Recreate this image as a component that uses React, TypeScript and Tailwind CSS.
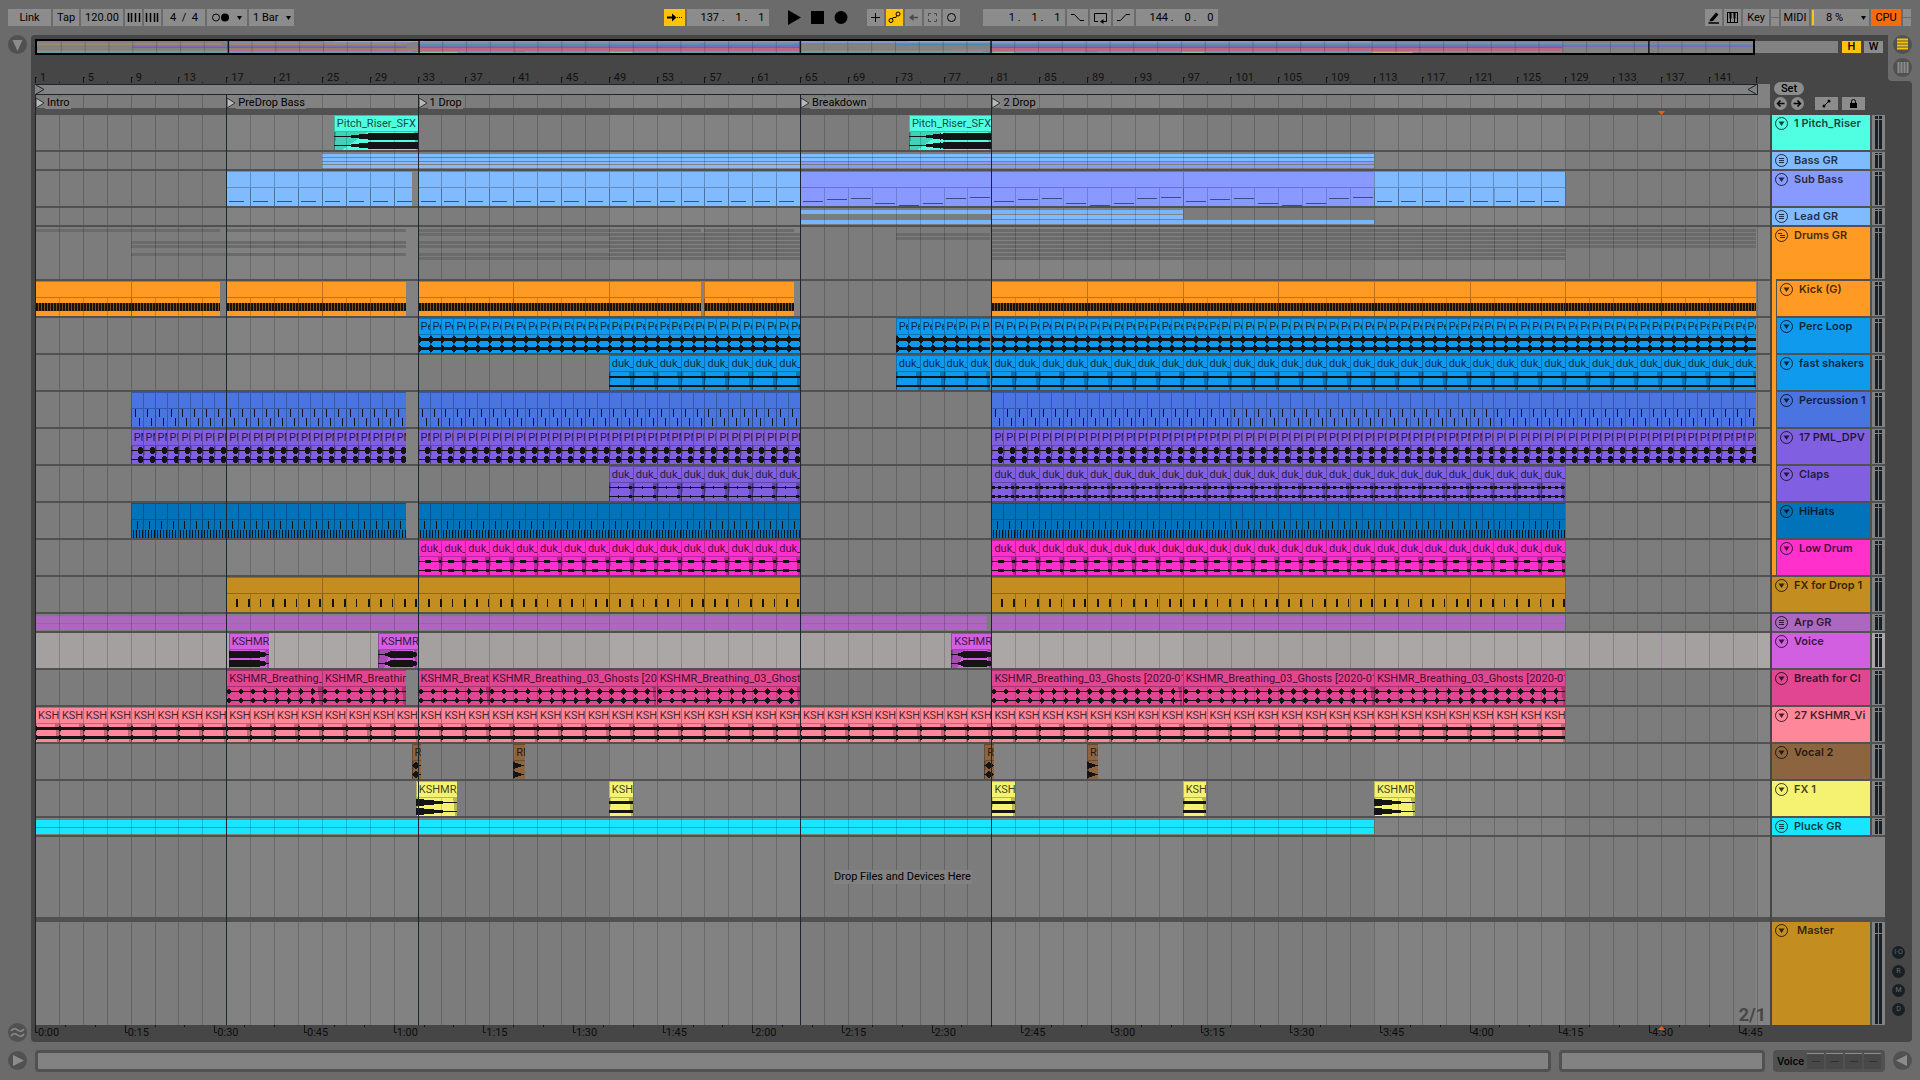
import type { ReactNode } from "react";
import clsx from "clsx";

const TOTAL_BARS = 145.13;
const BAR_PX = 11.955;
const VIEW_W = 1735;

const pct = (bars: number) => `${(bars / TOTAL_BARS) * 100}%`;

type WaveKind =
  | "riser" | "perc" | "shaker" | "pml" | "claps" | "clapsFast" | "low"
  | "voiceOut" | "voiceIn" | "breath" | "vinyl" | "blip" | "decay" | "block"
  | "kick" | "percMidi" | "hihat" | "fxMidi" | "bass" | "lead" | "none";

interface Clip {
  start: number;
  end: number;
  wave: WaveKind;
  label?: string;
  color?: string;
}

interface Strip {
  start: number;
  end: number;
  y: number;
  h: number;
  color: string;
}

interface Track {
  name: string;
  bg: string;
  hex: string;
  height: string;
  px: number;
  icon?: "fold" | "group" | "groupOpen";
  child?: boolean;
  selected?: boolean;
  clips?: Clip[];
  strips?: Strip[];
}

function repeat(start: number, end: number, len: number, wave: WaveKind, label?: string, color?: string): Clip[] {
  const out: Clip[] = [];
  for (let b = start; b < end; b += len) {
    out.push({ start: b, end: Math.min(b + len, end), wave, label, color });
  }
  return out;
}

const TALL = "h-[35px]";
const SHORT = "h-[17px]";
const BREATH = "KSHMR_Breathing_03_Ghosts [2020-01";

const drumTracks: Track[] = [
  {
    name: "Kick (G)", bg: "bg-[#ff9a24]", hex: "#ff9a24", height: TALL, px: 35, child: true,
    clips: [
      ...repeat(1, 16.5, 8, "kick"), ...repeat(17, 32, 8, "kick"),
      ...repeat(33, 56.7, 8, "kick"), ...repeat(57, 64.5, 8, "kick"), ...repeat(81, 145, 8, "kick"),
    ],
  },
  {
    name: "Perc Loop", bg: "bg-[#109aee]", hex: "#109aee", height: TALL, px: 35, child: true,
    clips: [...repeat(33, 65, 1, "perc", "Pe"), ...repeat(73, 80.9, 1, "perc", "Pe"), ...repeat(81, 145, 1, "perc", "Pe")],
  },
  {
    name: "fast shakers", bg: "bg-[#109aee]", hex: "#109aee", height: TALL, px: 35, child: true,
    clips: [...repeat(49, 65, 2, "shaker", "duk_"), ...repeat(73, 80.9, 2, "shaker", "duk_"), ...repeat(81, 145, 2, "shaker", "duk_")],
  },
  {
    name: "Percussion 1", bg: "bg-[#4a74e0]", hex: "#4a74e0", height: TALL, px: 35, child: true,
    clips: [...repeat(9, 32, 1, "percMidi"), ...repeat(33, 65, 1, "percMidi"), ...repeat(81, 145, 1, "percMidi")],
  },
  {
    name: "17 PML_DPV", bg: "bg-[#8060e0]", hex: "#8060e0", height: TALL, px: 35, child: true,
    clips: [...repeat(9, 32, 1, "pml", "PM"), ...repeat(33, 65, 1, "pml", "PM"), ...repeat(81, 145, 1, "pml", "PM")],
  },
  {
    name: "Claps", bg: "bg-[#8060e0]", hex: "#8060e0", height: TALL, px: 35, child: true,
    clips: [...repeat(49, 65, 2, "claps", "duk_"), ...repeat(81, 129, 2, "clapsFast", "duk_")],
  },
  {
    name: "HiHats", bg: "bg-[#0073bb]", hex: "#0073bb", height: TALL, px: 35, child: true,
    clips: [...repeat(9, 32, 1, "hihat"), ...repeat(33, 65, 1, "hihat"), ...repeat(81, 129, 1, "hihat")],
  },
  {
    name: "Low Drum", bg: "bg-[#ff30cc]", hex: "#ff30cc", height: TALL, px: 35, child: true,
    clips: [...repeat(33, 65, 2, "low", "duk_"), ...repeat(81, 129, 2, "low", "duk_")],
  },
];

const BLUE = "#80bbff";
const INDIGO = "#889aff";

const tracks: Track[] = [
  {
    name: "1 Pitch_Riser", bg: "bg-[#50ffe2]", hex: "#50ffe2", height: TALL, px: 35,
    clips: [
      { start: 26, end: 33, wave: "riser", label: "Pitch_Riser_SFX" },
      { start: 74.1, end: 81, wave: "riser", label: "Pitch_Riser_SFX" },
    ],
  },
  {
    name: "Bass GR", bg: "bg-[#80bbff]", hex: BLUE, height: SHORT, px: 17, icon: "group",
    strips: [
      { start: 25, end: 113, y: 2, h: 3, color: BLUE },
      { start: 25, end: 113, y: 6, h: 3, color: BLUE },
      { start: 25, end: 65, y: 10, h: 2, color: BLUE },
      { start: 25, end: 65, y: 13, h: 3, color: BLUE },
      { start: 65, end: 113, y: 10, h: 2, color: INDIGO },
      { start: 65, end: 113, y: 13, h: 3, color: INDIGO },
    ],
  },
  {
    name: "Sub Bass", bg: "bg-[#889aff]", hex: INDIGO, height: TALL, px: 35,
    clips: [
      ...repeat(17, 32.5, 2, "bass", undefined, BLUE),
      ...repeat(33, 65, 2, "bass", undefined, BLUE),
      ...repeat(65, 113, 16, "lead"),
      ...repeat(113, 129, 2, "bass", undefined, BLUE),
    ],
  },
  {
    name: "Lead GR", bg: "bg-[#80bbff]", hex: BLUE, height: SHORT, px: 17, icon: "group",
    strips: [
      { start: 65, end: 97, y: 2, h: 4, color: "#79b5f8" },
      { start: 81, end: 97, y: 7, h: 4, color: BLUE },
      { start: 65, end: 113, y: 12, h: 4, color: "#79b5f8" },
    ],
  },
  {
    name: "Drums GR", bg: "bg-[#ff9a24]", hex: "#ff9a24", height: "h-[52px]", px: 52, icon: "groupOpen",
    strips: drumTracks.flatMap((t, row) =>
      mergeRuns(t.clips ?? []).map(([start, end]) => ({ start, end, y: 2 + row * 4, h: 3, color: "#6b6b6b" })),
    ),
  },
  ...drumTracks,
  {
    name: "FX for Drop 1", bg: "bg-[#c48d20]", hex: "#c48d20", height: TALL, px: 35,
    clips: [...repeat(17, 65, 8, "fxMidi"), ...repeat(81, 129, 8, "fxMidi")],
  },
  {
    name: "Arp GR", bg: "bg-[#ab68be]", hex: "#ab68be", height: SHORT, px: 17, icon: "group",
    strips: [
      { start: 1, end: 80.6, y: 2, h: 7, color: "#ab68be" },
      { start: 1, end: 80.6, y: 10, h: 6, color: "#ab68be" },
      { start: 81, end: 129, y: 2, h: 7, color: "#ab68be" },
      { start: 81, end: 129, y: 10, h: 6, color: "#ab68be" },
    ],
  },
  {
    name: "Voice", bg: "bg-[#d25ee0]", hex: "#d25ee0", height: TALL, px: 35, selected: true,
    clips: [
      { start: 17.2, end: 20.55, wave: "voiceOut", label: "KSHMR_" },
      { start: 29.7, end: 33, wave: "voiceIn", label: "KSHMR_" },
      { start: 77.65, end: 81, wave: "voiceIn", label: "KSHMR_" },
    ],
  },
  {
    name: "Breath for Cl", bg: "bg-[#e04692]", hex: "#e04692", height: TALL, px: 35,
    clips: [
      ...repeat(17, 32, 8, "breath", BREATH),
      { start: 33, end: 39, wave: "breath", label: BREATH },
      { start: 39, end: 53, wave: "breath", label: BREATH },
      { start: 53, end: 65, wave: "breath", label: BREATH },
      ...repeat(81, 129, 16, "breath", BREATH),
    ],
  },
  {
    name: "27 KSHMR_Vi", bg: "bg-[#ff879a]", hex: "#ff879a", height: TALL, px: 35,
    clips: repeat(1, 129, 2, "vinyl", "KSHM"),
  },
  {
    name: "Vocal 2", bg: "bg-[#8c6540]", hex: "#8c6540", height: TALL, px: 35,
    clips: [
      { start: 32.5, end: 33.25, wave: "blip", label: "R" },
      { start: 41, end: 41.95, wave: "decay", label: "RM" },
      { start: 80.4, end: 81.25, wave: "blip", label: "R" },
      { start: 89, end: 89.95, wave: "decay", label: "RM" },
    ],
  },
  {
    name: "FX 1", bg: "bg-[#f4f270]", hex: "#f4f270", height: TALL, px: 35,
    clips: [
      { start: 32.85, end: 36.3, wave: "decay", label: "KSHMR_" },
      { start: 49, end: 51, wave: "block", label: "KSHM" },
      { start: 81, end: 83, wave: "block", label: "KSHM" },
      { start: 97, end: 98.95, wave: "block", label: "KSHM" },
      { start: 113, end: 116.45, wave: "decay", label: "KSHMR_" },
    ],
  },
  {
    name: "Pluck GR", bg: "bg-[#19e5ff]", hex: "#19e5ff", height: SHORT, px: 17, icon: "group",
    strips: [
      { start: 1, end: 113, y: 2, h: 7, color: "#19e5ff" },
      { start: 1, end: 113, y: 10, h: 6, color: "#19e5ff" },
    ],
  },
];

const locators = [
  { bar: 1, name: "Intro" },
  { bar: 17, name: "PreDrop Bass" },
  { bar: 33, name: "1 Drop" },
  { bar: 65, name: "Breakdown" },
  { bar: 81, name: "2 Drop" },
];

function mergeRuns(clips: Clip[]): [number, number][] {
  const runs: [number, number][] = [];
  for (const c of clips) {
    const last = runs[runs.length - 1];
    if (last && Math.abs(last[1] - c.start) < 0.01) last[1] = c.end;
    else runs.push([c.start, c.end]);
  }
  return runs;
}

/* ---------- waveforms ---------- */

const noise = (x: number) => Math.abs(Math.sin(x * 12.9898) * 43758.5453) % 1;

function amplitude(kind: WaveKind, t: number, len: number) {
  const f = t % 1;
  const p = t / len;
  switch (kind) {
    case "riser":
      return p < 0.15 ? 0.5 : Math.min(3.2, 0.5 + (p - 0.15) * 9) + (p > 0.3 ? noise(t) * 0.6 : 0);
    case "perc":
      return f < 0.17 || f > 0.95 ? 3.8 : 1.6 + noise(t) * 0.5;
    case "shaker":
      return 1;
    case "pml":
      return f > 0.66 && f < 0.97 ? 3.9 : 0.5;
    case "claps":
      return Math.abs(t - 0.8) < 0.09 || Math.abs(t - 1.8) < 0.12 ? 1.4 : 0.5;
    case "clapsFast":
      return [0.25, 0.75, 1.3, 1.85].some((c) => Math.abs(t - c) < 0.12) ? 1.5 : 0.5;
    case "low":
      return (t > 0.6 && t < 1.15) || t > 1.8 ? 1.5 : 0.5;
    case "voiceOut":
      return p > 0.92 ? 0.5 : 3 - Math.max(0, p - 0.75) * 9 + noise(t) * 0.3;
    case "voiceIn":
      return p < 0.15 ? 0.5 : Math.min(3.1, 0.6 + (p - 0.15) * 14) - Math.max(0, p - 0.88) * 12 + noise(t) * 0.3;
    case "breath":
      return Math.max(0.5, 3.4 - Math.abs(f - 0.25) * 14);
    case "vinyl":
      return t < 0.2 ? 2.6 : 1.1 + noise(t) * 0.5;
    case "blip":
      return Math.max(0.5, 4 - Math.abs(p - 0.5) * 9);
    case "decay":
      return Math.max(0.5, 3.9 * (1 - p * 1.15));
    case "block":
      return 1.5;
    default:
      return 0;
  }
}

function envelopePath(kind: WaveKind, len: number) {
  const w = Math.round(len * 12);
  return [4.5, 13.5]
    .map((mid) => {
      const top: string[] = [];
      const bottom: string[] = [];
      for (let x = 0; x <= w; x++) {
        const a = amplitude(kind, x / 12, len);
        top.push(`${x} ${(mid - a).toFixed(2)}`);
        bottom.unshift(`${x} ${(mid + a).toFixed(2)}`);
      }
      return `M${top.join("L")}L${bottom.join("L")}Z`;
    })
    .join("");
}

const LEAD_NOTES = [12, 10, 9, 14, 16, 14, 9, 8];

function notePath(kind: WaveKind, len: number) {
  let d = "";
  // slightly over a whole unit so a note never falls between two pixels
  const rect = (x: number, y: number, w: number, h: number) => {
    d += `M${x} ${y}h${w + 0.05}v${h}h${-w - 0.05}Z`;
  };
  if (kind === "kick") for (let x = 0; x < len * 12 - 1; x += 3) rect(x + 1, 5, 2, 8);
  if (kind === "percMidi") {
    rect(4, 0, 1, 8);
    rect(8, 9, 1, 8);
  }
  if (kind === "hihat") {
    rect(6, 1, 1, 8);
    for (let x = 2; x < 12; x += 3) rect(x, 10, 1, 8);
  }
  if (kind === "fxMidi") for (let b = 0; b < len; b++) rect(b * 12 + (b === len - 1 ? 9 : 10), 5, b % 3 === 2 ? 1 : 2, 8);
  if (kind === "bass") rect(3, 13, Math.min(15, len * 12 - 3), 1);
  if (kind === "lead") for (let i = 0; i < len / 2; i++) rect(i * 24 + 3, LEAD_NOTES[i % 8] + 1, 20, 1);
  return d;
}

const MIDI: WaveKind[] = ["kick", "percMidi", "hihat", "fxMidi", "bass", "lead", "none"];

function Waveform({ kind, len }: { kind: WaveKind; len: number }) {
  const w = Math.round(len * 12);
  const midi = MIDI.includes(kind);
  const soft = kind === "bass" || kind === "lead";
  return (
    <svg
      className="relative z-20 block h-[18px] w-full"
      viewBox={`0 0 ${w} 18`}
      preserveAspectRatio="none"
      shapeRendering="crispEdges"
      aria-hidden="true"
    >
      {kind === "kick" && <rect x="0" y="5" width={w} height="8" fill="#000" opacity="0.5" />}
      {kind === "riser" && <path d={`M0 0H${w * 0.4}L${w * 0.1} 18H0Z`} fill="#000" opacity="0.18" />}
      {kind === "voiceIn" && <path d={`M0 0H${w * 0.35}L${w * 0.15} 18H0Z`} fill="#000" opacity="0.2" />}
      {!midi && len > 1 && <path d={`M${w} 0H${w - 4}L${w - 2} 18H${w}Z`} fill="#000" opacity="0.25" />}
      {!midi && <path d="M0 0H2L1 18H0Z" fill="#000" opacity="0.2" />}
      <path
        d={midi ? notePath(kind, len) : envelopePath(kind, len)}
        fill={soft ? "#1f3a66" : "#141414"}
        opacity={soft ? 0.8 : 1}
      />
    </svg>
  );
}

/* ---------- timeline ---------- */

const gridPath = Array.from({ length: 72 }, (_, i) => `M${Math.round((i + 1) * 2 * BAR_PX)} 0h1v10h-1Z`).join("");
const bandPath = [0, 2, 4, 6, 8]
  .map((i) => `M${Math.round(i * 16 * BAR_PX)} 0h${Math.round(16 * BAR_PX)}v10h${-Math.round(16 * BAR_PX)}Z`)
  .join("");

function Shading() {
  return (
    <svg className="absolute inset-0 size-full" viewBox={`0 0 ${VIEW_W} 10`} preserveAspectRatio="none" aria-hidden="true">
      <path d={bandPath} fill="#000" opacity="0.04" />
    </svg>
  );
}

function Grid() {
  return (
    <svg
      className="absolute inset-0 z-10 size-full"
      viewBox={`0 0 ${VIEW_W} 10`}
      preserveAspectRatio="none"
      shapeRendering="crispEdges"
      aria-hidden="true"
    >
      <path d={gridPath} fill="#000" opacity="0.18" />
    </svg>
  );
}

function ClipBlock({ clip, color }: { clip: Clip; color: string }) {
  const len = clip.end - clip.start;
  return (
    <div
      className="absolute inset-y-0 overflow-hidden"
      style={{ left: pct(clip.start - 1), width: pct(len), backgroundColor: clip.color ?? color }}
    >
      <div
        className="relative z-20 h-[17px] overflow-hidden border-y border-l border-black/25 pl-[2px] text-[11px] leading-[15px] whitespace-nowrap text-black/75"
        style={{ backgroundColor: clip.color ?? color }}
      >
        {clip.label}
      </div>
      <div className="relative">
        <span className="absolute inset-y-0 left-0 z-20 w-px bg-black/25" />
        <Waveform kind={clip.wave} len={len} />
      </div>
    </div>
  );
}

function Lane({ track }: { track: Track }) {
  return (
    <div className={clsx("relative isolate shrink-0 overflow-hidden", track.height, track.selected ? "bg-[#aba7a6]" : "bg-[#828282]")}>
      <Shading />
      {track.clips?.map((clip) => <ClipBlock key={clip.start} clip={clip} color={track.hex} />)}
      {track.strips?.map((s, i) => (
        <div
          key={i}
          className="absolute"
          style={{ left: pct(s.start - 1), width: pct(s.end - s.start), top: s.y, height: s.h, backgroundColor: s.color }}
        />
      ))}
      <Grid />
      {track.selected && <div className="absolute inset-y-0 z-20 w-px bg-[#f07030]" style={{ left: pct(136) }} />}
    </div>
  );
}

function Overview() {
  let y = 0;
  const total = tracks.reduce((sum, t) => sum + t.px + 2, 0);
  return (
    <div className="flex h-4">
      <div className="flex-1 border-2 border-black bg-[#828282]">
        <svg className="block h-3 w-full" viewBox={`0 0 144 ${total}`} preserveAspectRatio="none" aria-hidden="true">
          {tracks.map((t) => {
            const top = y;
            y += t.px + 2;
            const runs = t.clips ? mergeRuns(t.clips) : (t.strips ?? []).map((s): [number, number] => [s.start, s.end]);
            return t.icon === "groupOpen"
              ? null
              : runs.map(([a, b], i) => (
                  <rect key={t.name + i} x={a - 1} y={top} width={b - a} height={t.px} fill={t.hex} opacity={t.clips ? 0.8 : 0.6} />
                ));
          })}
          {Array.from({ length: 71 }, (_, i) => (
            <rect key={i} x={i * 2 + 2} y="0" width="0.08" height={total} fill="#1c2530" opacity="0.25" />
          ))}
          {[16, 32, 64, 80, 135.2].map((b) => (
            <rect key={b} x={b} y="0" width="0.12" height={total} fill="#10151a" />
          ))}
        </svg>
      </div>
      <div className="my-[2px] w-[83px] bg-[#828282]" />
    </div>
  );
}

function BarRuler() {
  return (
    <div className="relative h-[29px] shrink-0 overflow-hidden text-[11px] leading-[12px] text-[#111]">
      {Array.from({ length: 37 }, (_, i) => {
        const bar = i * 4 + 1;
        return (
          <div key={bar} className="absolute bottom-0 flex h-3" style={{ left: pct(bar - 1) }}>
            <span className="mt-auto mb-px h-[6px] w-[2px] border-t border-l border-[#151515]" />
            {bar < 145 && <span className="pl-[3px]">{bar}</span>}
          </div>
        );
      })}
      {Array.from({ length: 36 }, (_, i) => (
        <span key={i} className="absolute bottom-[1px] size-px bg-[#151515]" style={{ left: pct(i * 4 + 2) }} />
      ))}
    </div>
  );
}

function LoopBar() {
  return (
    <div className="relative h-[11px] shrink-0 bg-[#828282]">
      <div className="flex h-full items-center justify-between border-y border-r border-[#1c2530]" style={{ width: pct(144.1) }}>
        <svg width="10" height="9" viewBox="0 0 10 9" aria-hidden="true">
          <path d="M1 0L9 4.5L1 9" fill="none" stroke="#1c2530" />
        </svg>
        <svg width="10" height="9" viewBox="0 0 10 9" aria-hidden="true">
          <path d="M9 0L1 4.5L9 9" fill="none" stroke="#1c2530" />
        </svg>
      </div>
    </div>
  );
}

function LocatorRow() {
  return (
    <div className="relative isolate h-[13px] shrink-0 bg-[#828282]">
      <Shading />
      <Grid />
      {locators.map((l) => (
        <div key={l.bar} className="absolute top-[2px] z-20 flex h-3 items-center" style={{ left: pct(l.bar - 1) }}>
          <svg width="10" height="12" viewBox="0 0 10 12" aria-hidden="true">
            <path d="M1 1L9 6L1 11Z" fill="#b8b8b8" stroke="#333" />
          </svg>
          <span className="bg-[#808080] pr-px pl-[2px] text-[11px] leading-3 text-black">{l.name}</span>
        </div>
      ))}
    </div>
  );
}

function TimeRuler() {
  return (
    <div className="relative h-[17px] shrink-0 overflow-hidden bg-[#464646] text-[11px] leading-[15px] text-[#0d0d0d]">
      {Array.from({ length: 58 }, (_, i) => {
        const secs = i * 5;
        const major = i % 3 === 0;
        return (
          <div key={secs} className="absolute top-0 flex" style={{ left: pct(secs / 2) }}>
            <span className={clsx("border-[#151515]", major ? "h-2 w-[3px] border-b border-l" : "h-[2px] border-l")} />
            {major && <span>{`${Math.floor(secs / 60)}:${String(secs % 60).padStart(2, "0")}`}</span>}
          </div>
        );
      })}
      <svg className="absolute top-px -ml-[3px]" style={{ left: pct(136) }} width="7" height="4" viewBox="0 0 7 4" aria-hidden="true">
        <path d="M3.500 0L7 4H0Z" fill="#ff5a00" />
      </svg>
    </div>
  );
}

function Timeline() {
  return (
    <div className="flex min-w-0 flex-1 flex-col">
      <div className="-mr-[68px] shrink-0">
        <Overview />
      </div>
      <BarRuler />
      <LoopBar />
      <div className="relative flex flex-1 flex-col bg-[#515151]">
        <LocatorRow />
        <div className="relative h-[7px] shrink-0">
          <svg className="absolute bottom-0 -ml-[3px]" style={{ left: pct(136) }} width="7" height="4" viewBox="0 0 7 4" aria-hidden="true">
            <path d="M0 0H7L3.500 4Z" fill="#ff5a00" />
          </svg>
        </div>
        <div className="flex flex-1 flex-col gap-[2px]">
          {tracks.map((t) => (
            <Lane key={t.name} track={t} />
          ))}
          <div className="relative isolate flex min-h-10 flex-1 items-center justify-center bg-[#828282]">
            <Shading />
            <Grid />
            <span className="z-20 bg-[#828282] px-px text-[11px] leading-[14px] text-black">Drop Files and Devices Here</span>
          </div>
        </div>
        <div className="relative isolate mt-[5px] flex h-[103px] shrink-0 items-end justify-end bg-[#828282] pr-1">
          <Shading />
          <Grid />
          <span className="z-20 text-lg leading-5 font-bold text-[#464646]">2/1</span>
        </div>
        {locators.map((l) => (
          <div key={l.bar} className="absolute inset-y-0 z-30 w-px bg-[#1c2530]" style={{ left: pct(l.bar - 1) }} />
        ))}
      </div>
      <TimeRuler />
    </div>
  );
}

/* ---------- track headers ---------- */

function FoldIcon({ kind = "fold" }: { kind?: Track["icon"] }) {
  return (
    <svg width="13" height="13" viewBox="0 0 13 13" fill="none" stroke="#000" strokeOpacity="0.75" aria-hidden="true">
      <circle cx="6.500" cy="6.500" r="6" />
      {kind === "fold" && <path d="M3.500 4.500H9.500L6.500 9Z" fill="#000" fillOpacity="0.75" stroke="none" />}
      {kind === "group" && <path d="M4 4.500H9M4 6.500H9M4 8.500H9" />}
      {kind === "groupOpen" && <path d="M3 4.500H7M5 6.500H10M5 8.500H10" />}
    </svg>
  );
}

function Meter({ height, selected, peak = "h-[3px]" }: { height: string; selected?: boolean; peak?: string }) {
  return (
    <div className={clsx("flex w-[13px] shrink-0 gap-px px-[3px] py-px", height, selected ? "bg-[#aba7a6]" : "bg-[#828282]")}>
      {[0, 1].map((ch) => (
        <div key={ch} className="flex w-[3px] flex-col gap-px">
          <div className={clsx("shrink-0 bg-[#182025]", peak)} />
          <div className="flex-1 bg-[#182025]" />
        </div>
      ))}
    </div>
  );
}

function TrackHeader({ track }: { track: Track }) {
  return (
    <div className={clsx("flex gap-[2px]", track.height)}>
      <div className={clsx("flex min-w-0 flex-1 items-start gap-[6px] overflow-hidden pt-[2px] pl-[3px]", track.bg)}>
        <button type="button" aria-label={`Fold ${track.name}`} className="shrink-0">
          <FoldIcon kind={track.icon} />
        </button>
        <span className="font-['Inter',sans-serif] text-[11px] leading-[13px] font-semibold whitespace-nowrap text-black/75">{track.name}</span>
      </div>
      <Meter height={track.height} selected={track.selected} peak={track.px === 17 ? "h-px" : track.px === 52 ? "h-1" : "h-[3px]"} />
    </div>
  );
}

function MiniButton({ label, round, children }: { label: string; round?: boolean; children: ReactNode }) {
  return (
    <button
      type="button"
      aria-label={label}
      className={clsx("flex h-[13px] items-center justify-center bg-[#8c8c8c]", round ? "w-[13px] rounded-full" : "w-[23px]")}
    >
      {children}
    </button>
  );
}

function TrackHeaders() {
  const before = tracks.slice(0, 5);
  const after = tracks.slice(5 + drumTracks.length);
  return (
    <div className="flex w-[113px] shrink-0 flex-col">
      <div className="flex h-[76px] shrink-0 flex-col justify-between pb-[5px]">
        <div className="flex justify-end gap-[3px] pt-[2px] pr-[2px]">
          <button type="button" className="h-3 w-[19px] bg-[#ffc40a] text-[11px] leading-3 font-medium text-black">H</button>
          <button type="button" className="h-3 w-[19px] bg-[#8c8c8c] text-[11px] leading-3 font-medium text-black">W</button>
        </div>
        <div className="flex flex-col items-start gap-[2px] pl-[2px]">
          <button type="button" className="h-[13px] w-[30px] rounded-full bg-[#8c8c8c] text-[11px] leading-[13px] font-medium text-black">Set</button>
          <div className="flex">
            <div className="mr-[11px] flex gap-1">
              <MiniButton label="Previous locator" round>
                <svg width="9" height="9" viewBox="0 0 9 9" stroke="#000" strokeWidth="1.500" fill="none"><path d="M8.500 4.500H1.500M4.500 1.500L1.500 4.500L4.500 7.500" /></svg>
              </MiniButton>
              <MiniButton label="Next locator" round>
                <svg width="9" height="9" viewBox="0 0 9 9" stroke="#000" strokeWidth="1.500" fill="none"><path d="M0.500 4.500H7.500M4.500 1.500L7.500 4.500L4.500 7.500" /></svg>
              </MiniButton>
            </div>
            <div className="flex gap-1">
              <MiniButton label="Automation mode">
                <svg width="9" height="9" viewBox="0 0 9 9"><path d="M2 7L7 2" stroke="#000" /><circle cx="2" cy="7" r="1.500" /><circle cx="7" cy="2" r="1.500" /></svg>
              </MiniButton>
              <MiniButton label="Lock envelopes">
                <svg width="9" height="9" viewBox="0 0 9 9"><rect x="1" y="4" width="7" height="5" /><path d="M2.500 4V2.500a2 2 0 0 1 4 0V4" fill="none" stroke="#000" /></svg>
              </MiniButton>
            </div>
          </div>
        </div>
      </div>
      <div className="flex flex-1 flex-col bg-[#515151]">
        <div className="flex flex-1 flex-col gap-[2px]">
          {before.map((t) => (
            <TrackHeader key={t.name} track={t} />
          ))}
          <div className="flex gap-px">
            <div className="-mt-[2px] w-1 bg-[#ff9a24]" />
            <div className="flex min-w-0 flex-1 flex-col gap-[2px]">
              {drumTracks.map((t) => (
                <TrackHeader key={t.name} track={t} />
              ))}
            </div>
          </div>
          {after.map((t) => (
            <TrackHeader key={t.name} track={t} />
          ))}
          <div className="min-h-10 flex-1 bg-[#828282]" />
        </div>
        <div className="mt-[5px] flex h-[103px] shrink-0 gap-[2px]">
          <div className="flex flex-1 items-start gap-[9px] bg-[#c48d20] pt-[2px] pl-[3px]">
            <button type="button" aria-label="Fold Master" className="shrink-0">
              <FoldIcon />
            </button>
            <span className="font-['Inter',sans-serif] text-[11px] leading-[13px] font-semibold text-black/75">Master</span>
          </div>
          <Meter height="h-[103px]" peak="h-[10px]" />
        </div>
      </div>
      <div className="h-[17px] shrink-0" />
    </div>
  );
}

/* ---------- toolbar ---------- */

const field = "block h-[17px] bg-[#8c8c8c] text-[11px] leading-[17px] text-black";

function ToolButton({ width, label, active, muted, children }: { width: string; label: string; active?: string; muted?: boolean; children: ReactNode }) {
  return (
    <button
      type="button"
      aria-label={label}
      className={clsx(
        "flex h-[17px] items-center justify-center gap-2 text-[11px] leading-[17px]",
        width,
        active ?? "bg-[#8c8c8c]",
        muted ? "text-[#4a4a4a]" : "text-black",
      )}
    >
      {children}
    </button>
  );
}

function Caret() {
  return (
    <svg width="5" height="4" viewBox="0 0 5 4" aria-hidden="true">
      <path d="M0 0H5L2.500 4Z" />
    </svg>
  );
}

function Glyph({ children, size = 15 }: { children: ReactNode; size?: number }) {
  return (
    <svg className="shrink-0" width={size} height={size} viewBox="0 0 15 15" fill="none" stroke="currentColor" aria-hidden="true">
      {children}
    </svg>
  );
}

function Lamps() {
  return (
    <div className="flex h-[17px] w-2 flex-col gap-px">
      <div className="h-2 bg-[#8c8c8c]" />
      <div className="h-2 bg-[#8c8c8c]" />
    </div>
  );
}

function Toolbar() {
  return (
    <header className="grid shrink-0 grid-cols-[1fr_auto_1fr] pt-[9px] pr-[9px] pb-[9px] pl-2">
      <div className="flex gap-[2px]">
        <ToolButton width="w-[43px]" label="Link">Link</ToolButton>
        <ToolButton width="w-[26px]" label="Tap">Tap</ToolButton>
        <input aria-label="Tempo" defaultValue="120.00" className={clsx(field, "w-[42px] text-center")} />
        <ToolButton width="w-[17px]" label="Nudge down">
          <Glyph><path d="M2.500 3V12M5.500 3V12M9.500 3V12M13.500 3V12" strokeWidth="1.500" /></Glyph>
        </ToolButton>
        <ToolButton width="w-[17px]" label="Nudge up">
          <Glyph><path d="M1.500 3V12M5.500 3V12M9.500 3V12M12.500 3V12" strokeWidth="1.500" /></Glyph>
        </ToolButton>
        <input aria-label="Time signature" defaultValue="4  /  4" className={clsx(field, "w-[42px] text-center whitespace-pre")} />
        <ToolButton width="w-[40px]" label="Metronome">
          <svg width="17" height="9" viewBox="0 0 17 9" aria-hidden="true">
            <circle cx="4" cy="4.500" r="3.500" fill="none" stroke="#000" />
            <circle cx="13" cy="4.500" r="4" />
          </svg>
          <Caret />
        </ToolButton>
        <div className="relative w-[45px]">
          <select aria-label="Quantization" className={clsx(field, "w-full appearance-none pl-1")}>
            <option>1 Bar</option>
          </select>
          <span className="pointer-events-none absolute inset-y-0 right-[3px] flex items-center"><Caret /></span>
        </div>
      </div>

      <div className="mr-[38px] flex items-center gap-[23px]">
        <div className="flex gap-[2px]">
          <ToolButton width="w-[21px]" label="Follow" active="bg-[#ffc40a]">
            <Glyph><path d="M0 7.500H8" strokeWidth="2" /><path d="M5 3.500L9.500 7.500L5 11.500Z" fill="currentColor" stroke="none" /><path d="M10 7.500H15" strokeDasharray="1 1" /></Glyph>
          </ToolButton>
          <input aria-label="Arrangement position" defaultValue="137 .    1 .    1" className={clsx(field, "w-[82px] pr-1 text-right")} />
        </div>
        <div className="-mr-1 -ml-1 flex items-center gap-[9px]">
          <button type="button" aria-label="Play"><svg className="block" width="14" height="15" viewBox="0 0 14 15"><path d="M0 0L13 7.500L0 15Z" /></svg></button>
          <button type="button" aria-label="Stop"><svg className="block" width="14" height="15" viewBox="0 0 14 15"><rect y="1" width="13" height="13" /></svg></button>
          <button type="button" aria-label="Record"><svg className="block" width="14" height="15" viewBox="0 0 14 15"><circle cx="7" cy="7.500" r="6.500" /></svg></button>
        </div>
        <div className="flex gap-[2px]">
          <ToolButton width="w-[17px]" label="Overdub"><Glyph><path d="M7.500 3V12M3 7.500H12" /></Glyph></ToolButton>
          <ToolButton width="w-[17px]" label="Automation arm" active="bg-[#ffc40a]">
            <Glyph><circle cx="4" cy="10.500" r="2" /><circle cx="11" cy="4" r="2" /><path d="M5.500 9L6 7.500H9L9.500 5.500" /></Glyph>
          </ToolButton>
          <ToolButton width="w-[17px]" label="Re-enable automation" muted>
            <Glyph><path d="M5 7.500H12" strokeWidth="1.500" /><path d="M7.500 4L3 7.500L7.500 11Z" fill="currentColor" stroke="none" /></Glyph>
          </ToolButton>
          <ToolButton width="w-[17px]" label="Capture" muted>
            <Glyph><path d="M3.500 6V3.500H6M9 3.500H11.500V6M11.500 9V11.500H9M6 11.500H3.500V9" /></Glyph>
          </ToolButton>
          <ToolButton width="w-[17px]" label="Session record"><Glyph><circle cx="7.500" cy="7.500" r="4" /></Glyph></ToolButton>
        </div>
        <div className="flex gap-[2px]">
          <input aria-label="Loop start" defaultValue="1 .    1 .    1" className={clsx(field, "w-[82px] pr-1 text-right")} />
          <ToolButton width="w-[21px]" label="Punch in"><Glyph><path d="M1 4.500H4.500L10 10.500H14" /></Glyph></ToolButton>
          <ToolButton width="w-[21px]" label="Loop">
            <Glyph><path d="M5 11.500H1.500V3.500H13.500V11.500H8.500" /><path d="M10.500 9L7 11.500L10.500 14Z" fill="currentColor" stroke="none" /></Glyph>
          </ToolButton>
          <ToolButton width="w-[21px]" label="Punch out"><Glyph><path d="M1 10.500H4.500L10 4.500H14" /></Glyph></ToolButton>
          <input aria-label="Loop length" defaultValue="144 .    0 .    0" className={clsx(field, "w-[82px] pr-1 text-right")} />
        </div>
      </div>

      <div className="flex justify-end gap-[2px]">
        <ToolButton width="w-[17px]" label="Draw mode">
          <Glyph><path d="M4 9.500L10 2.500L12.500 4.500L7 11L3.500 11.500Z" fill="currentColor" stroke="none" /><path d="M2.500 13H13" strokeWidth="1.500" /></Glyph>
        </ToolButton>
        <ToolButton width="w-[17px]" label="Computer MIDI keyboard">
          <Glyph><rect x="2.500" y="2.500" width="10" height="10" /><path d="M5.500 3V8.500M9.500 3V8.500" strokeWidth="2" /><path d="M5.500 8V12M9.500 8V12" /></Glyph>
        </ToolButton>
        <ToolButton width="w-[26px]" label="Key">Key</ToolButton>
        <Lamps />
        <ToolButton width="w-[28px]" label="MIDI">MIDI</ToolButton>
        <div className="relative w-[58px]">
          <select aria-label="CPU load" className={clsx(field, "w-full appearance-none pl-[15px]")}>
            <option>8 %</option>
          </select>
          <span className="pointer-events-none absolute inset-y-px left-px w-[2px] bg-[#ffc40a]" />
          <span className="pointer-events-none absolute inset-y-0 right-[3px] flex items-center"><Caret /></span>
        </div>
        <ToolButton width="w-[30px]" label="CPU" active="bg-[#f76b0f]">CPU</ToolButton>
        <Lamps />
      </div>
    </header>
  );
}

/* ---------- edges ---------- */

function RoundButton({ label, children }: { label: string; children: ReactNode }) {
  return (
    <button type="button" aria-label={label} className="size-[19px] shrink-0 rounded-full bg-[#515151]">
      <svg className="block" width="19" height="19" viewBox="0 0 19 19" fill="#8c8c8c" aria-hidden="true">{children}</svg>
    </button>
  );
}

function RightStrip() {
  return (
    <div className="flex w-8 shrink-0 flex-col bg-[#464646]">
      <div className="flex h-[46px] flex-col items-center gap-1 rounded-bl-sm bg-[#6b6b6b] pr-1">
        <RoundButton label="Show arrangement">
          <path d="M4 4.500H15M4 7.500H15M4 10.500H15M4 13.500H15" stroke="#ffc40a" strokeWidth="2" />
        </RoundButton>
        <RoundButton label="Show session">
          <path d="M5.500 4V15M8.500 4V15M11.500 4V15M14.500 4V15" stroke="#8c8c8c" strokeWidth="2" />
        </RoundButton>
      </div>
      <div className="flex flex-1 bg-[#6b6b6b]">
        <div className="flex w-6 flex-col justify-end gap-[6px] rounded-tr-sm rounded-br-sm bg-[#464646] pb-[26px] pl-1">
          {["I·O", "R", "M", "D"].map((s) => (
            <button key={s} type="button" className="size-[13px] rounded-full bg-[#182025] text-center text-[7px] leading-[13px] text-[#6b6b6b]">
              {s}
            </button>
          ))}
        </div>
      </div>
    </div>
  );
}

function StatusBar() {
  return (
    <footer className="flex h-[38px] shrink-0 items-start pt-2 pl-2">
      <div className="pt-px"><RoundButton label="Show help"><path d="M5 4L16 9.500L5 15Z" /></RoundButton></div>
      <div className="ml-2 h-[22px] flex-1 rounded-sm border-[3px] border-[#515151] bg-[#828282]" />
      <div className="ml-2 h-[22px] w-[206px] rounded-sm border-[3px] border-[#515151] bg-[#828282]" />
      <div className="ml-2 flex h-[22px] w-[112px] items-center justify-between rounded-sm bg-[#515151] pr-1 pl-1">
        <span className="font-['Inter',sans-serif] text-[10px] font-semibold text-black">Voice</span>
        <div className="flex gap-[2px]">
          {[0, 1, 2, 3].map((i) => (
            <div key={i} className="flex h-4 w-[17px] items-center justify-center border-t border-[#8c8c8c] bg-[#484848]">
              <span className="h-px w-2 bg-[#303030]" />
            </div>
          ))}
        </div>
      </div>
      <div className="mr-2 ml-2 pt-px"><RoundButton label="Show devices"><path d="M14 4L3 9.500L14 15Z" /></RoundButton></div>
    </footer>
  );
}

export default function App() {
  return (
    <div className="flex min-h-screen flex-col bg-[#6b6b6b] font-['Roboto','Liberation_Sans',sans-serif]">
      <Toolbar />
      <main className="flex flex-1">
        <div className="flex w-[31px] shrink-0 flex-col justify-between pl-2">
          <RoundButton label="Show browser"><path d="M4.500 5H14.500L9.500 16Z" /></RoundButton>
          <RoundButton label="Show groove pool">
            <path d="M3 8Q6 4 9.500 7T16 6M3 13Q6 9 9.500 12T16 11" fill="none" stroke="#8c8c8c" strokeWidth="1.500" />
          </RoundButton>
        </div>
        <div className="flex min-w-0 flex-1 gap-[2px] rounded-l-sm bg-[#464646] pt-1 pr-[3px] pl-1">
          <Timeline />
          <TrackHeaders />
        </div>
        <RightStrip />
      </main>
      <StatusBar />
    </div>
  );
}
